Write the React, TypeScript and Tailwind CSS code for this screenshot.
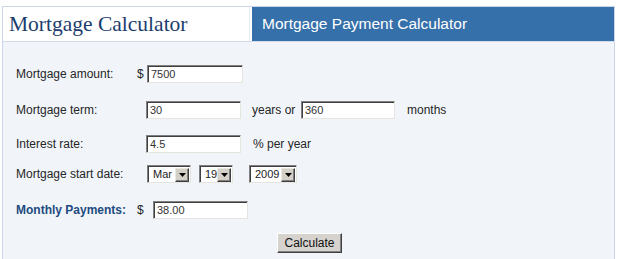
const font = "font-['Liberation_Sans',Arial,sans-serif]";

const fieldCls =
  "h-[18px] border border-t-[#808080] border-l-[#808080] border-b-[#e6e4de] border-r-[#e6e4de] shadow-[inset_1px_1px_0_#404040] bg-white pl-[3px] text-[11px] text-[#333] outline-none " +
  font;

function Field({ value, w }: { value: string; w: string }) {
  return <input readOnly value={value} className={`${fieldCls} ${w}`} />;
}

function Select({ value, w }: { value: string; w: string }) {
  return (
    <div
      className={`flex h-[18px] items-center justify-between border border-t-[#808080] border-l-[#808080] border-b-[#e6e4de] border-r-[#e6e4de] shadow-[inset_1px_1px_0_#404040] bg-white pl-[5px] pr-[1px] pt-[1px] ${w}`}
    >
      <span className="text-[11px] text-[#222] leading-none">{value}</span>
      <span className="flex h-[14px] w-[14px] items-center justify-center bg-[#d4d0c8] border border-t-[#e8e6e0] border-l-[#e8e6e0] border-b-[#404040] border-r-[#404040] shadow-[inset_-1px_-1px_0_#808080]">
        <svg width="7" height="4" viewBox="0 0 7 4">
          <path d="M0 0h7L3.5 4z" fill="#000" />
        </svg>
      </span>
    </div>
  );
}

function Label({ children, bold }: { children: React.ReactNode; bold?: boolean }) {
  return (
    <span
      className={`w-[121px] shrink-0 text-[12px] ${bold ? "font-bold text-[#1f4b80]" : "text-[#262626]"}`}
    >
      {children}
    </span>
  );
}

export default function App() {
  return (
    <div className={`h-[259px] w-[617px] overflow-hidden bg-white px-[2px] pt-[6px] ${font}`}>
      <div className="h-full border border-b-0 border-[#cdd6e9] bg-[#f1f5fa]">
        {/* Header */}
        <div className="flex h-[35px] border-b border-[#d2daeb] bg-white">
          <div className="flex w-[247px] items-center border-r border-[#e6eaf2] pl-[6px]">
            <span className="font-['Liberation_Serif','Times_New_Roman',serif] text-[21.5px] text-[#1c3d6e]">
              Mortgage Calculator
            </span>
          </div>
          <div className="ml-[2px] flex flex-1 items-center bg-[#3670aa] pl-[10px]">
            <span className="text-[15.5px] text-white">Mortgage Payment Calculator</span>
          </div>
        </div>

        {/* Form */}
        <div className="flex flex-col pl-[13px] pt-[23px]">
          <div className="flex h-[18px] items-center">
            <Label>Mortgage amount:</Label>
            <span className="w-[10px] text-[12px] text-[#262626]">$</span>
            <Field value="7500" w="w-[96px]" />
          </div>

          <div className="mt-[18px] flex h-[18px] items-center">
            <Label>Mortgage term:</Label>
            <span className="w-[9px]" />
            <Field value="30" w="w-[95px]" />
            <span className="ml-[11px] w-[49px] text-[12px] text-[#262626]">years or</span>
            <Field value="360" w="w-[94px]" />
            <span className="ml-[12px] text-[12px] text-[#262626]">months</span>
          </div>

          <div className="mt-[16px] flex h-[18px] items-center">
            <Label>Interest rate:</Label>
            <span className="w-[9px]" />
            <Field value="4.5" w="w-[95px]" />
            <span className="ml-[12px] text-[12px] text-[#262626]">% per year</span>
          </div>

          <div className="mt-[12px] flex h-[18px] items-center">
            <Label>Mortgage start date:</Label>
            <span className="w-[10px]" />
            <Select value="Mar" w="w-[44px]" />
            <span className="w-[8px]" />
            <Select value="19" w="w-[34px]" />
            <span className="w-[16px]" />
            <Select value="2009" w="w-[48px]" />
          </div>

          <div className="mt-[18px] flex h-[18px] items-center">
            <Label bold>Monthly Payments:</Label>
            <span className="w-[16px] text-[12px] text-[#262626]">$</span>
            <Field value="38.00" w="w-[95px]" />
          </div>

          <div className="mt-[14px] flex justify-center pr-[11px]">
            <button className="h-[20px] w-[65px] border border-t-white border-l-white border-b-[#404040] border-r-[#404040] bg-[#d6d3ce] text-[12px] text-[#111] shadow-[inset_-1px_-1px_0_#808080]">
              Calculate
            </button>
          </div>
        </div>
      </div>
    </div>
  );
}
